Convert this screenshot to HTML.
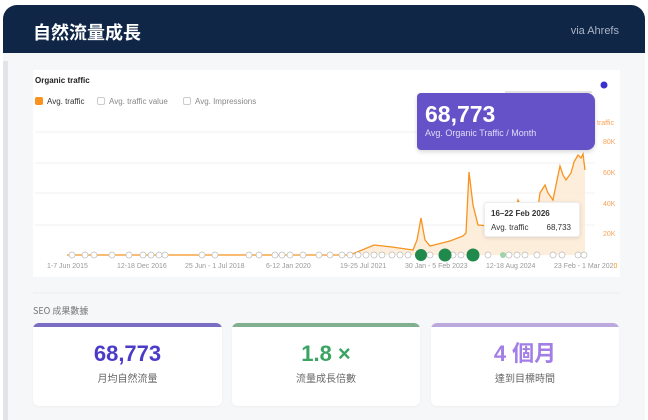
<!DOCTYPE html>
<html><head><meta charset="utf-8"><style>
*{margin:0;padding:0;box-sizing:border-box}
html,body{width:648px;height:420px;overflow:hidden}
body{background:#fff;font-family:"Liberation Sans","Noto Sans CJK TC",sans-serif;position:relative}
.card{position:absolute;left:3px;top:5px;width:642px;height:415px;border-radius:14px 14px 0 0;background:#f6f7f9;overflow:hidden}
.hd{position:absolute;left:0;top:0;width:642px;height:48px;background:#0f2647}
.hd h1{position:absolute;left:30px;top:14px;color:#fff;font-size:18px;font-weight:bold;font-family:"Noto Sans CJK TC",sans-serif}
.hd .via{position:absolute;right:26px;top:20px;color:#aab4c4;font-size:11px}
.strip{position:absolute;left:0;top:56px;width:5px;height:380px;background:#e3e4e7}
.panel{position:absolute;left:33px;top:70px;width:587px;height:207px;background:#fff}
.t{position:absolute;font-size:8px;color:#222;font-weight:bold}
.lg{position:absolute;font-size:8px;color:#888;top:97px}
.cb{display:inline-block;width:8px;height:8px;border:1px solid #ccc;border-radius:2px;vertical-align:-1px;margin-right:4px}
.purple{position:absolute;left:417px;top:93px;width:178px;height:57px;background:#6552c8;border-radius:4px 8px 8px 4px;box-shadow:0 2px 4px rgba(0,0,0,.15);color:#fff}
.purple b{position:absolute;left:8px;top:8px;font-size:23px;font-family:"Liberation Sans",sans-serif}
.purple span{position:absolute;left:8px;top:35px;font-size:9px;color:#e0dcf6}
.tip{position:absolute;left:484px;top:202px;width:96px;height:35px;background:#fff;border:1px solid #eee;border-radius:3px;box-shadow:0 1px 4px rgba(0,0,0,.12);font-size:8px;color:#333}
.sec{position:absolute;left:33px;top:304px;font-size:9px;color:#777;font-family:"Noto Sans CJK TC",sans-serif}
.k{position:absolute;top:323px;height:83px;background:#fff;border-radius:6px;text-align:center;overflow:hidden;box-shadow:0 1px 2px rgba(0,0,0,.04)}
.k i{position:absolute;left:0;top:0;right:0;height:4px}
.k b{display:block;margin-top:18px;font-size:22px;line-height:26px;font-family:"Liberation Sans","Noto Sans CJK TC",sans-serif}
.k span{display:block;margin-top:3px;font-size:10px;color:#666;font-family:"Noto Sans CJK TC",sans-serif}
</style></head><body>
<div class="card">
<div class="hd"><h1>自然流量成長</h1><div class="via">via Ahrefs</div></div>
<div class="strip"></div>
</div>
<div class="panel"></div>
<div class="t" style="left:35px;top:76px">Organic traffic</div>
<div class="lg" style="left:35px;color:#333"><span class="cb" style="background:#f7931e;border-color:#f7931e"></span>Avg. traffic</div>
<div class="lg" style="left:97px"><span class="cb"></span>Avg. traffic value</div>
<div class="lg" style="left:183px"><span class="cb"></span>Avg. Impressions</div>
<svg style="position:absolute;left:0;top:0" width="648" height="420">
<line x1="505" y1="92" x2="592" y2="92" stroke="#ccc"/>
<circle cx="604" cy="85" r="3.5" fill="#3b2fcf"/>
<g stroke="#f0f0f2" stroke-width="1">
<line x1="35" y1="132" x2="595" y2="132"/><line x1="35" y1="163" x2="595" y2="163"/><line x1="35" y1="193" x2="595" y2="193"/><line x1="35" y1="225" x2="595" y2="225"/>
</g>
<polygon fill="#fde8d2" opacity=".8" points="350,255 374,245 392,247 413,250 417,240 421,218 425,240 430,246 450,241 463,236 466,233 469,172 473,205 478,225 490,226 500,226 512,228 518,200 525,215 537,215 540,193 545,185 548,193 553,200 557,180 560,166 563,175 566,180 571,173 574,162 578,155 581,158 583,154 585,170 585,255"/>
<polyline fill="none" stroke="#f7931e" stroke-width="1.3" points="67,255 350,255 374,245 392,247 413,250 417,240 421,218 425,240 430,246 450,241 463,236 466,233 469,172 473,205 478,225 490,226 500,226 512,228 518,200 525,215 537,215 540,193 545,185 548,193 553,200 557,180 560,166 563,175 566,180 571,173 574,162 578,155 581,158 583,154 585,170"/>
<g fill="#fff" stroke="#bbb" stroke-width=".7">
<circle cx="72" cy="255" r="3"/><circle cx="85" cy="255" r="3"/><circle cx="94" cy="255" r="3"/><circle cx="112" cy="255" r="3"/><circle cx="129" cy="255" r="3"/><circle cx="143" cy="255" r="3"/><circle cx="151" cy="255" r="3"/><circle cx="159" cy="255" r="3"/><circle cx="165" cy="255" r="3"/>
<circle cx="202" cy="255" r="3"/><circle cx="215" cy="255" r="3"/><circle cx="249" cy="255" r="3"/><circle cx="259" cy="255" r="3"/><circle cx="275" cy="255" r="3"/><circle cx="282" cy="255" r="3"/><circle cx="290" cy="255" r="3"/><circle cx="303" cy="255" r="3"/><circle cx="319" cy="255" r="3"/><circle cx="330" cy="255" r="3"/><circle cx="342" cy="255" r="3"/><circle cx="350" cy="255" r="3"/><circle cx="358" cy="255" r="3"/><circle cx="366" cy="255" r="3"/><circle cx="374" cy="255" r="3"/><circle cx="382" cy="255" r="3"/><circle cx="392" cy="255" r="3"/><circle cx="400" cy="255" r="3"/><circle cx="408" cy="255" r="3"/><circle cx="430" cy="255" r="3"/><circle cx="453" cy="255" r="3"/><circle cx="461" cy="255" r="3"/><circle cx="488" cy="255" r="3"/><circle cx="509" cy="255" r="3"/><circle cx="517" cy="255" r="3"/><circle cx="525" cy="255" r="3"/><circle cx="537" cy="255" r="3"/><circle cx="553" cy="255" r="3"/><circle cx="562" cy="255" r="3"/><circle cx="578" cy="255" r="3"/><circle cx="584" cy="255" r="3"/>
</g>
<g fill="#1f8a4c"><circle cx="421" cy="255" r="6"/><circle cx="445" cy="255" r="6.5"/><circle cx="473" cy="255" r="6.5"/><circle cx="503" cy="255" r="3" fill="#9fd3a8"/></g>
<g font-size="7" fill="#999" font-family="Liberation Sans">
<text x="47" y="268">1-7 Jun 2015</text><text x="117" y="268">12-18 Dec 2016</text><text x="185" y="268">25 Jun - 1 Jul 2018</text><text x="266" y="268">6-12 Jan 2020</text><text x="340" y="268">19-25 Jul 2021</text><text x="405" y="268">30 Jan - 5 Feb 2023</text><text x="486" y="268">12-18 Aug 2024</text><text x="554" y="268">23 Feb - 1 Mar 202<tspan fill="#f7931e">0</tspan></text>
</g>
<g font-size="7" fill="#f9a35a" font-family="Liberation Sans">
<text x="597" y="125">traffic</text><text x="603" y="144">80K</text><text x="603" y="175">60K</text><text x="603" y="206">40K</text><text x="603" y="236">20K</text>
</g>
<line x1="33" y1="293" x2="620" y2="293" stroke="#ebecef"/>
</svg>
<div class="purple"><b>68,773</b><span>Avg. Organic Traffic / Month</span></div>
<div class="tip"><div style="position:absolute;left:6px;top:6px;font-weight:bold">16–22 Feb 2026</div><div style="position:absolute;left:6px;top:20px">Avg. traffic</div><div style="position:absolute;right:8px;top:20px">68,733</div></div>
<div class="sec">SEO 成果數據</div>
<div class="k" style="left:33px;width:189px"><i style="background:#7b6cc4"></i><b style="color:#4b3bc9">68,773</b><span>月均自然流量</span></div>
<div class="k" style="left:232px;width:188px"><i style="background:#80b08f"></i><b style="color:#3aa463">1.8 ×</b><span>流量成長倍數</span></div>
<div class="k" style="left:431px;width:188px"><i style="background:#bba9de"></i><b style="color:#a27ee6">4 個月</b><span>達到目標時間</span></div>
</body></html>
